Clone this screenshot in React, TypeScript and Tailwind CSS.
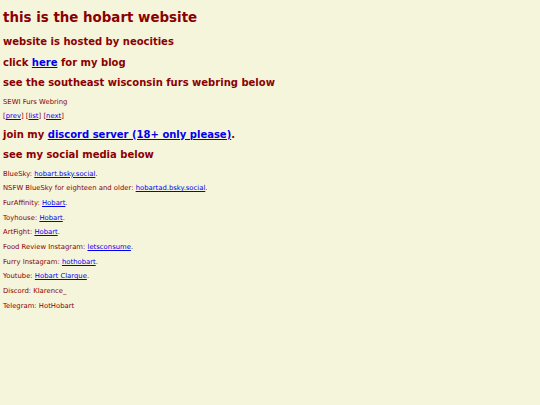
import React from "react";

const socials: { label: string; link?: string; text?: string }[] = [
  { label: "BlueSky: ", link: "hobart.bsky.social" },
  { label: "NSFW BlueSky for eighteen and older: ", link: "hobartad.bsky.social" },
  { label: "FurAffinity: ", link: "Hobart" },
  { label: "Toyhouse: ", link: "Hobart" },
  { label: "ArtFight: ", link: "Hobart" },
  { label: "Food Review Instagram: ", link: "letsconsume" },
  { label: "Furry Instagram: ", link: "hothobart" },
  { label: "Youtube: ", link: "Hobart Clarque" },
  { label: "Discord: ", text: "Klarence_" },
  { label: "Telegram: ", text: "HotHobart" },
];

function A({ children }: { children: React.ReactNode }) {
  return (
    <a href="#" className="text-[#0000ee] underline">
      {children}
    </a>
  );
}

export default function App() {
  return (
    <div
      className="min-h-screen bg-[#f5f5dc] text-[#8b0000] px-[3px] pt-px pb-4"
      style={{ fontFamily: '"DejaVu Sans", Verdana, sans-serif' }}
    >
      <h1 className="text-[13.4px] font-bold leading-[16px] mt-[9px] mb-[10px]">
        this is the hobart website
      </h1>
      <h2 className="text-[10px] font-bold leading-[12px] my-[8.5px]">
        website is hosted by neocities
      </h2>
      <h2 className="text-[10px] font-bold leading-[12px] my-[8.5px]">
        click <A>here</A> for my blog
      </h2>
      <h2 className="text-[10px] font-bold leading-[12px] my-[8.5px]">
        see the southeast wisconsin furs webring below
      </h2>
      <p className="text-[6.85px] leading-[8px] my-[6.67px]">SEWI Furs Webring</p>
      <p className="text-[6.85px] leading-[8px] my-[6.67px]">
        [<A>prev</A>] [<A>list</A>] [<A>next</A>]
      </p>
      <h2 className="text-[10px] font-bold leading-[12px] my-[8.5px]">
        join my <A>discord server (18+ only please)</A>.
      </h2>
      <h2 className="text-[10px] font-bold leading-[12px] my-[8.5px]">
        see my social media below
      </h2>
      {socials.map((s) => (
        <p key={s.label} className="text-[6.85px] leading-[8px] my-[6.67px]">
          {s.label}
          {s.link ? (
            <>
              <A>{s.link}</A>.
            </>
          ) : (
            s.text
          )}
        </p>
      ))}
    </div>
  );
}
